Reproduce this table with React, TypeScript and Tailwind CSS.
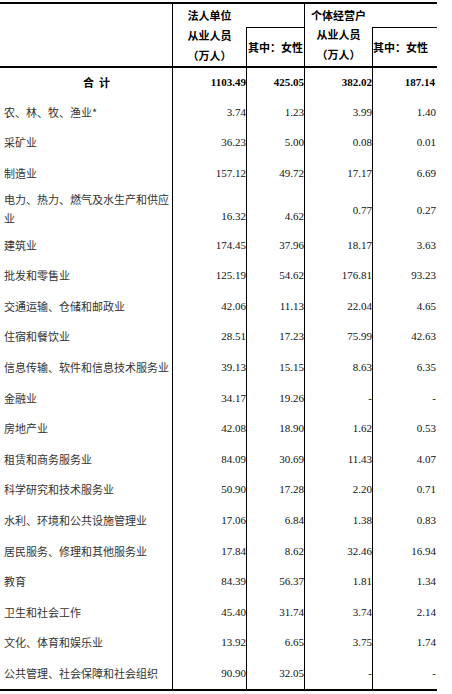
const cjk = "font-['Noto_Sans_CJK_SC',sans-serif]";
const serif = "font-['Liberation_Serif','Times_New_Roman',serif]";

type Row = {
  label: string[];
  v: [string, string, string, string];
  tall?: boolean;
};

const ROWS: Row[] = [
  { label: ["农、林、牧、渔业*"], v: ["3.74", "1.23", "3.99", "1.40"] },
  { label: ["采矿业"], v: ["36.23", "5.00", "0.08", "0.01"] },
  { label: ["制造业"], v: ["157.12", "49.72", "17.17", "6.69"] },
  {
    label: ["电力、热力、燃气及水生产和供应", "业"],
    v: ["16.32", "4.62", "0.77", "0.27"],
    tall: true,
  },
  { label: ["建筑业"], v: ["174.45", "37.96", "18.17", "3.63"] },
  { label: ["批发和零售业"], v: ["125.19", "54.62", "176.81", "93.23"] },
  { label: ["交通运输、仓储和邮政业"], v: ["42.06", "11.13", "22.04", "4.65"] },
  { label: ["住宿和餐饮业"], v: ["28.51", "17.23", "75.99", "42.63"] },
  { label: ["信息传输、软件和信息技术服务业"], v: ["39.13", "15.15", "8.63", "6.35"] },
  { label: ["金融业"], v: ["34.17", "19.26", "-", "-"] },
  { label: ["房地产业"], v: ["42.08", "18.90", "1.62", "0.53"] },
  { label: ["租赁和商务服务业"], v: ["84.09", "30.69", "11.43", "4.07"] },
  { label: ["科学研究和技术服务业"], v: ["50.90", "17.28", "2.20", "0.71"] },
  { label: ["水利、环境和公共设施管理业"], v: ["17.06", "6.84", "1.38", "0.83"] },
  { label: ["居民服务、修理和其他服务业"], v: ["17.84", "8.62", "32.46", "16.94"] },
  { label: ["教育"], v: ["84.39", "56.37", "1.81", "1.34"] },
  { label: ["卫生和社会工作"], v: ["45.40", "31.74", "3.74", "2.14"] },
  { label: ["文化、体育和娱乐业"], v: ["13.92", "6.65", "3.75", "1.74"] },
  { label: ["公共管理、社会保障和社会组织"], v: ["90.90", "32.05", "-", "-"] },
];

const bodyCols = "grid grid-cols-[173px_74px_58px_68px_64px]";

function Header() {
  return (
    <div
      className={`grid grid-cols-[173px_73px_59px_67px_65px] grid-rows-[23px_39px] border-y-2 border-black font-bold text-[11px] text-black ${cjk}`}
    >
      <div className="row-span-2 border-r border-black" />
      <div className="row-span-2 flex flex-col items-center pt-[1px] leading-[20px]">
        <span>法人单位</span>
        <span>从业人员</span>
        <span>（万人）</span>
      </div>
      <div className="border-r border-black" />
      <div className="row-span-2 flex flex-col items-center pt-[1.5px] leading-[19.5px]">
        <span>个体经营户</span>
        <span>从业人员</span>
        <span>（万人）</span>
      </div>
      <div />
      <div className="flex items-center whitespace-nowrap border-x border-t border-black pl-[1px]">
        其中：女性
      </div>
      <div className="flex items-center whitespace-nowrap border-l border-t border-black">
        其中：女性
      </div>
    </div>
  );
}

function TotalRow() {
  return (
    <div className={`${bodyCols} h-[29px] font-bold text-[11px] text-black`}>
      <div className={`flex items-center gap-[5px] border-r border-black pl-[83px] ${cjk}`}>
        <span>合</span>
        <span>计</span>
      </div>
      {["1103.49", "425.05", "382.02", "187.14"].map((n, i) => (
        <div
          key={n}
          className={`flex items-center justify-end ${serif} ${i < 3 ? "border-r border-black" : "pr-[2px]"}`}
        >
          {n}
        </div>
      ))}
    </div>
  );
}

function DataRow({ row }: { row: Row }) {
  return (
    <div className={`${bodyCols} ${row.tall ? "h-[41px]" : "h-[30.6px]"} text-[11px]`}>
      <div
        className={`flex flex-col justify-center border-r border-black pl-[4px] leading-[19px] text-[#333] ${cjk}`}
      >
        {row.label.map((l) => (
          <span key={l} className="whitespace-nowrap">
            {l}
          </span>
        ))}
      </div>
      {row.v.map((n, i) => (
        <div
          key={i}
          className={`flex justify-end leading-[19px] text-[#111] ${serif} ${
            row.tall ? (i < 2 ? "items-end pb-[4px]" : "items-end pb-[10px]") : "items-center"
          } ${i < 3 ? "border-r border-black" : "pr-[1px]"}`}
        >
          {n}
        </div>
      ))}
    </div>
  );
}

export default function App() {
  return (
    <div className="h-[694px] w-[452px] overflow-hidden bg-white pt-[2px]">
      <div className="w-[437px]">
        <Header />
        <div className="border-b-2 border-black">
          <TotalRow />
          {ROWS.map((r) => (
            <DataRow key={r.label[0]} row={r} />
          ))}
        </div>
      </div>
    </div>
  );
}
